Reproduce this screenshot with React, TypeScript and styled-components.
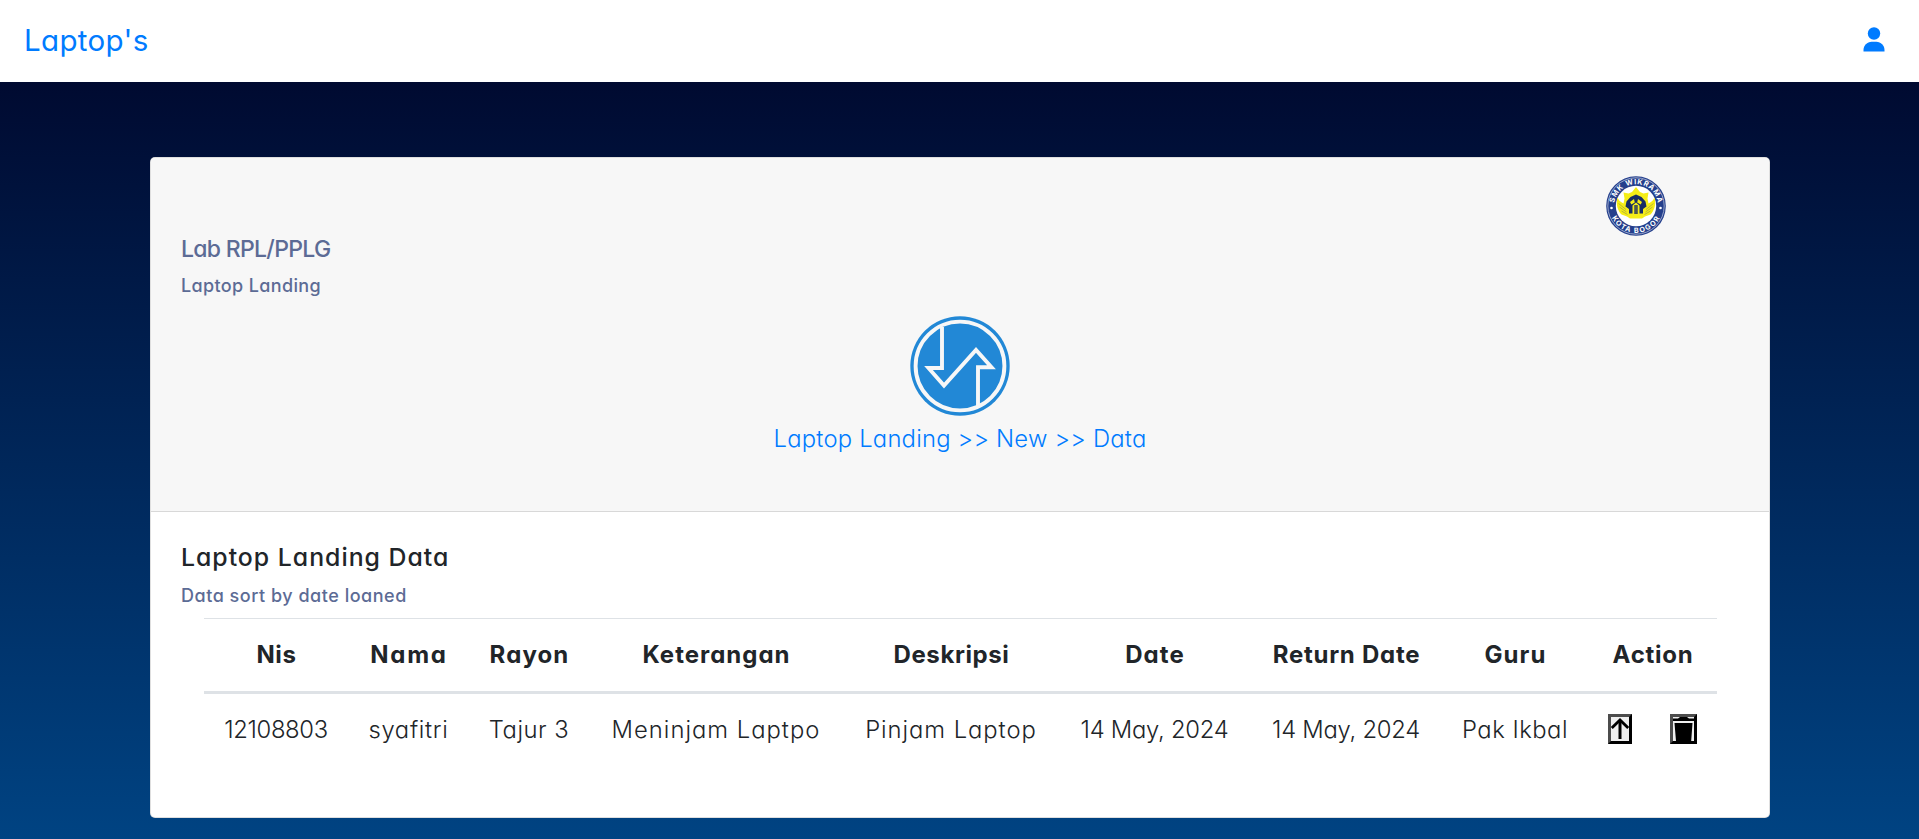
import React from "react";
import styled, { createGlobalStyle } from "styled-components";

const GlobalStyle = createGlobalStyle`
  *, *::before, *::after { box-sizing: border-box; }
  body {
    margin: 0;
    font-family: Inter, "Open Sans", sans-serif;
    font-feature-settings: "cv11";
    color: #212529;
    background: #fff;
  }
`;

const Page = styled.div`
  height: 839px;
  overflow: hidden;
  background: linear-gradient(to bottom, #000428 0, #004e92 985px);
`;

const Navbar = styled.header`
  display: flex;
  align-items: center;
  justify-content: space-between;
  height: 82px;
  padding: 0 34px 2px 24px;
  background: #fff;
  color: #007bff;
`;

const Brand = styled.a`
  font-size: 29.5px;
  line-height: 36px;
  font-weight: 370;
  letter-spacing: 0.35px;
`;

const Card = styled.main`
  display: flex;
  flex-direction: column;
  width: 1620px;
  height: 661px;
  margin: 75px 0 0 150px;
  background: #fff;
  border: 1px solid rgba(0, 0, 0, 0.125);
  border-radius: 5px;
  overflow: hidden;
`;

const CardHeader = styled.section`
  height: 354px;
  flex: none;
  background: #f7f7f7;
  border-bottom: 1px solid #d8d8d8;
`;

const HeaderTop = styled.div`
  display: flex;
  justify-content: space-between;
  height: 158px;
  padding: 18px 103px 0 30px;
`;

const HeaderTitles = styled.div`
  padding-top: 59px;
`;

const LabTitle = styled.h4`
  margin: 0;
  font-size: 23px;
  line-height: 29px;
  font-weight: 450;
  letter-spacing: -0.7px;
  color: #5c6b95;
`;

const Subtitle = styled.h6<{ $spacing: number; $top: number }>`
  margin: ${(p) => p.$top}px 0 0;
  font-size: 18px;
  line-height: 22px;
  font-weight: 450;
  letter-spacing: ${(p) => p.$spacing}px;
  color: #5c6b95;
`;

const Center = styled.div`
  display: flex;
  flex-direction: column;
  align-items: center;
`;

const Breadcrumb = styled.a`
  margin-top: 8px;
  font-size: 23.8px;
  line-height: 30px;
  font-weight: 350;
  letter-spacing: 0.22px;
  color: #007bff;
`;

const CardBody = styled.section`
  padding: 30px 29px 0 30px;
`;

const DataTitle = styled.h4`
  margin: 0;
  font-size: 24.8px;
  line-height: 31px;
  font-weight: 450;
  letter-spacing: 1px;
`;

const Table = styled.table`
  table-layout: fixed;
  width: 1513px;
  margin: 11px 0 0 23px;
  border-collapse: separate;
  border-spacing: 0;
  text-align: center;
  font-size: 24px;
  line-height: 30px;
`;

const HeadCell = styled.th<{ $width: number; $spacing: number }>`
  width: ${(p) => p.$width}px;
  height: 76px;
  padding: 0 0 0 1px;
  border-top: 1px solid #dee2e6;
  border-bottom: 3px solid #dee2e6;
  font-weight: 700;
  letter-spacing: ${(p) => p.$spacing}px;
  white-space: nowrap;
`;

const Cell = styled.td<{ $spacing?: number }>`
  height: 70px;
  padding: 2px 0 0;
  font-size: 23.8px;
  font-weight: 340;
  letter-spacing: ${(p) => p.$spacing ?? 0}px;
  white-space: nowrap;
`;

const ActionCell = styled.td`
  height: 70px;
  padding: 0;
`;

const Actions = styled.div`
  display: flex;
  justify-content: center;
  gap: 38px;
`;

const ActionButton = styled.button<{ $width: number }>`
  display: block;
  width: ${(p) => p.$width}px;
  height: 30px;
  padding: 0;
  border: 3px solid;
  border-color: #4c4c4c #000 #000 #4c4c4c;
  background: #efefef;
  svg { display: block; }
`;

const columns = [
  { label: "Nis", width: 144, spacing: 0.6 },
  { label: "Nama", width: 121, spacing: 1.7 },
  { label: "Rayon", width: 120, spacing: 1.1 },
  { label: "Keterangan", width: 254, spacing: 1.0 },
  { label: "Deskripsi", width: 216, spacing: 0.6 },
  { label: "Date", width: 191, spacing: 1.1 },
  { label: "Return Date", width: 192, spacing: 0.75 },
  { label: "Guru", width: 146, spacing: 1.1 },
  { label: "Action", width: 129, spacing: 0.75 },
];

const row = [
  { value: "12108803", spacing: -0.35 },
  { value: "syafitri", spacing: 0.7 },
  { value: "Tajur 3", spacing: 0.5 },
  { value: "Meninjam Laptpo", spacing: 1 },
  { value: "Pinjam Laptop", spacing: 0.95 },
  { value: "14 May, 2024", spacing: -0.25 },
  { value: "14 May, 2024", spacing: -0.25 },
  { value: "Pak Ikbal", spacing: 0.5 },
];

const UserIcon = () => (
  <svg width="22" height="26" viewBox="0 0 22 26" fill="currentColor">
    <circle cx="11" cy="6.500" r="6.200" />
    <path d="M.5 24.500v-1.500c0-4.600 3.600-8.300 8.200-8.300h4.600c4.600 0 8.200 3.700 8.200 8.300v1.500z" />
  </svg>
);

const SchoolLogo = () => (
  <svg width="60" height="60" viewBox="0 0 60 60">
    <defs>
      <path id="arc-top" d="M8.800 36A22 22 0 1 1 51.200 36" />
      <path id="arc-bottom" d="M3.500 34A26.800 26.800 0 0 0 56.500 34" />
    </defs>
    <circle cx="30" cy="30" r="29.800" fill="#243f8c" />
    <circle cx="30" cy="30" r="28.200" fill="none" stroke="#b9c3dc" strokeWidth=".8" />
    <circle cx="30" cy="30" r="20.200" fill="#fff" />
    <path
      d="M17.500 16.500l5 1 3.500-1.500L30 11l4 5 3.500 1.500 5-1-1 6 1 5c3-1.500 5-3.500 6-6 1.800 6.500 0 13-4 17l-5.500 2L36 42.500H24L21 40.500l-5.500-2c-4-4-5.800-10.500-4-17 1 2.500 3 4.500 6 6l1-5z"
      fill="#f5ed18"
    />
    <path
      d="M12.500 27.500l7.500 6m-6.500-2.500l7 5m-5-1l6 3.500M47.500 27.500l-7.500 6m6.500-2.500l-7 5m5-1l-6 3.500"
      stroke="#a9ab3c"
      strokeWidth=".8"
      fill="none"
    />
    <path d="M20.500 25.500l4-4.500 5.500-2.500 5.500 2.500 4 4.500 1 5-3.500 2.500v4.500h-3.500v-8L30 26.500l-3.500 3v8H23V33l-3.500-2.500z" fill="#182d65" />
    <path d="M24 26l4-3 .8 3.500-3.500 2zM36 26l-4-3-.8 3.500 3.500 2z" fill="#f5ed18" />
    <path d="M28.200 29h3.600v9h-3.600z" fill="#4b5650" />
    <circle cx="5.500" cy="32" r="1.300" fill="#fff" />
    <circle cx="54.500" cy="32" r="1.300" fill="#fff" />
    <g fill="#fff" fontFamily="Inter, sans-serif" fontWeight="700" fontSize="7.200" textAnchor="middle">
      <text letterSpacing=".75"><textPath href="#arc-top" startOffset="50.500%">SMK WIKRAMA</textPath></text>
      <text letterSpacing="1.300"><textPath href="#arc-bottom" startOffset="50.500%">KOTA BOGOR</textPath></text>
    </g>
  </svg>
);

const TransferIcon = () => (
  <svg width="100" height="100" viewBox="0 0 100 100">
    <circle cx="50" cy="50" r="49.700" fill="#2288d6" />
    <g fill="none" stroke="#f7f7f7" strokeWidth="3.900">
      <circle cx="50" cy="50" r="44.400" />
      <path d="M32 11v41H18.500L34 69.500 66 34l15.500 17.200H68V90" />
    </g>
  </svg>
);

const ArrowUpIcon = () => (
  <svg width="18" height="24" viewBox="0 0 18 24" fill="none" stroke="#000">
    <path d="M9 22V3.500" strokeWidth="3" />
    <path d="M.8 11L9 3l8.200 8" strokeWidth="2.800" />
  </svg>
);

const TrashIcon = () => (
  <svg width="21" height="24" viewBox="0 0 21 24">
    <path d="M0 1.500h5L7 0h7l2 1.500h5V4H0zM1.500 6h18l-1.300 18H3z" fill="#000" />
  </svg>
);

export default function App() {
  return (
    <Page>
      <GlobalStyle />
      <Navbar>
        <Brand>Laptop's</Brand>
        <UserIcon />
      </Navbar>
      <Card>
        <CardHeader>
          <HeaderTop>
            <HeaderTitles>
              <LabTitle>Lab RPL/PPLG</LabTitle>
              <Subtitle $spacing={0.36} $top={11}>Laptop Landing</Subtitle>
            </HeaderTitles>
            <SchoolLogo />
          </HeaderTop>
          <Center>
            <TransferIcon />
            <Breadcrumb>{"Laptop Landing >> New >> Data"}</Breadcrumb>
          </Center>
        </CardHeader>
        <CardBody>
          <DataTitle>Laptop Landing Data</DataTitle>
          <Subtitle $spacing={0.52} $top={12}>Data sort by date loaned</Subtitle>
          <Table>
            <thead>
              <tr>
                {columns.map((c) => (
                  <HeadCell key={c.label} $width={c.width} $spacing={c.spacing}>{c.label}</HeadCell>
                ))}
              </tr>
            </thead>
            <tbody>
              <tr>
                {row.map((c, i) => (
                  <Cell key={i} $spacing={c.spacing}>{c.value}</Cell>
                ))}
                <ActionCell>
                  <Actions>
                    <ActionButton $width={24} aria-label="Return"><ArrowUpIcon /></ActionButton>
                    <ActionButton $width={27} aria-label="Delete"><TrashIcon /></ActionButton>
                  </Actions>
                </ActionCell>
              </tr>
            </tbody>
          </Table>
        </CardBody>
      </Card>
    </Page>
  );
}
